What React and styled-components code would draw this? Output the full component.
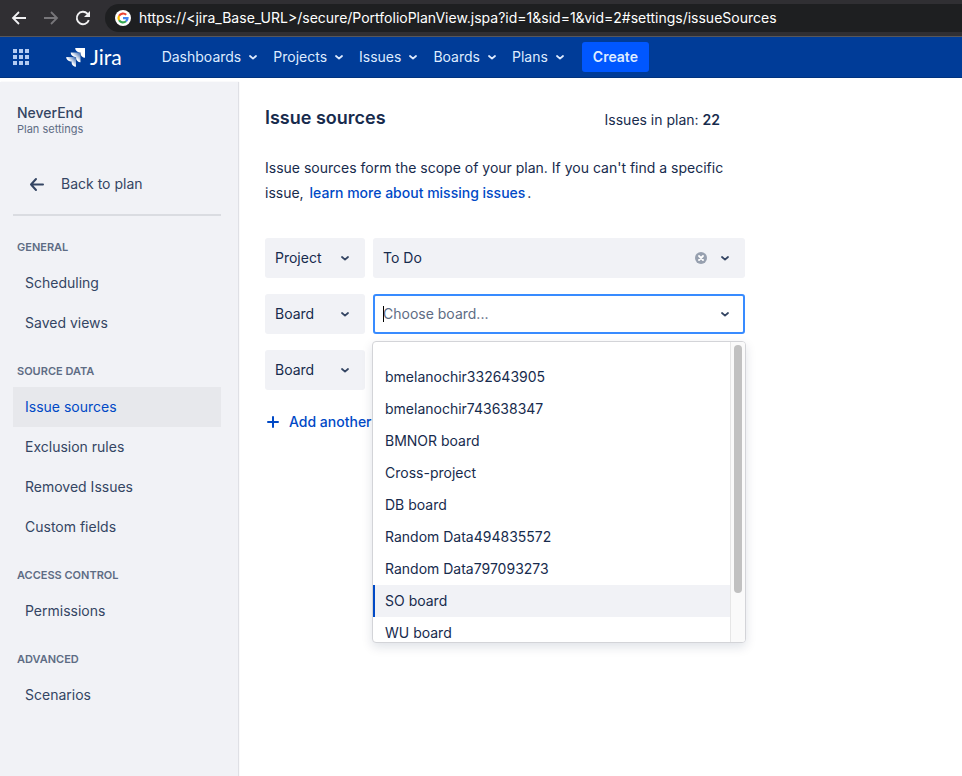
import React from 'react';
import styled, {createGlobalStyle} from 'styled-components';

const GlobalStyle = createGlobalStyle`
    *, *::before, *::after {
        box-sizing: border-box;
    }
    body {
        margin: 0;
        background: #fff;
        color: #172b4d;
        font-family: Inter, "Liberation Sans", sans-serif;
        font-size: 14px;
        line-height: 20px;
    }
    button, input, select {
        font: inherit;
        color: inherit;
    }
`;

const Page = styled.div`
    display: flex;
    flex-direction: column;
    min-height: 100vh;
`;

const BrowserBar = styled.div`
    display: flex;
    align-items: center;
    height: 37px;
    padding-left: 9px;
    background: #302f33;
    border-bottom: 1px solid #58575a;
`;

const BrowserButton = styled.button`
    display: flex;
    padding: 0;
    margin-right: 12px;
    border: 0;
    background: none;
    color: ${props => (props.disabled ? '#77767a' : '#f1f1f3')};
`;

const AddressBar = styled.label`
    display: flex;
    flex: 1;
    align-items: center;
    gap: 8px;
    height: 28px;
    padding-left: 10px;
    background: #1e1f21;
    border-radius: 14px 0 0 14px;
`;

const AddressInput = styled.input`
    flex: 1;
    min-width: 0;
    padding: 0;
    border: 0;
    outline: 0;
    background: none;
    color: #fff;
`;

const TopNav = styled.header`
    display: flex;
    align-items: center;
    height: 41px;
    padding-left: 12px;
    background: #003c98;
    border-bottom: 1px solid #00337f;
    color: #deebff;
`;

const IconButton = styled.button`
    display: flex;
    padding: 0;
    border: 0;
    background: none;
`;

const Logo = styled.a`
    display: flex;
    align-items: center;
    gap: 4px;
    margin-left: 36px;
    color: #fff;
    font-family: Lato, sans-serif;
    font-size: 21px;
    text-decoration: none;
`;

const NavMenus = styled.nav`
    display: flex;
    gap: 16px;
    margin-left: 40px;
`;

const NavButton = styled(IconButton)`
    align-items: center;
    gap: 8px;
    color: #deebff;
`;

const CreateButton = styled.button`
    height: 30px;
    margin-left: 18px;
    padding: 0 11px;
    border: 0;
    border-radius: 3px;
    background: #0057ff;
    color: #deebff;
    font-weight: 600;
`;

const Body = styled.div`
    display: flex;
    flex: 1;
    margin-top: 4px;
`;

const Sidebar = styled.aside`
    flex: 0 0 238px;
    padding: 23px 17px 24px 13px;
    background: #f1f2f6;
    box-shadow: 1px 0 1px #dfe0e5;
    color: #344563;
`;

const PlanName = styled.div`
    padding-left: 4px;
    font-weight: 500;
    line-height: 16px;
`;

const PlanCaption = styled.div`
    padding-left: 4px;
    color: #5e6c84;
    font-size: 11px;
    line-height: 16px;
`;

const BackLink = styled.a`
    display: flex;
    align-items: center;
    gap: 16px;
    height: 40px;
    margin-top: 27px;
    padding-left: 16px;
    color: inherit;
    text-decoration: none;
`;

const Rule = styled.hr`
    height: 2px;
    margin: 10px 0 23px;
    border: 0;
    background: #dadce1;
`;

const GroupTitle = styled.h2`
    margin: 20px 0 8px 4px;
    color: #5e6c84;
    font-size: 11px;
    font-weight: 600;
    line-height: 16px;
    text-transform: uppercase;
`;

const SideLink = styled.a`
    display: block;
    padding: 10px 12px;
    background: ${props => (props.$active ? '#e7e8ec' : 'transparent')};
    color: ${props => (props.$active ? '#0049c6' : 'inherit')};
    text-decoration: none;
`;

const Main = styled.main`
    flex: 1;
    min-width: 0;
    max-width: 534px;
    padding: 24px 27px;
`;

const TitleRow = styled.div`
    display: flex;
    align-items: center;
    justify-content: space-between;
    padding-right: 25px;
`;

const Title = styled.h1`
    margin: 0;
    font-size: 18px;
    font-weight: 600;
    line-height: 24px;
`;

const IssueCount = styled.div`
    padding-top: 4px;

    strong {
        font-weight: 600;
    }
`;

const Intro = styled.p`
    margin: 25px 0 33px;
    padding-right: 10px;
    line-height: 25px;
`;

const TextLink = styled.a`
    margin: 0 2px;
    color: #0049c6;
    font-weight: 500;
    text-decoration: none;
`;

const Sources = styled.div`
    display: flex;
    flex-direction: column;
    gap: 16px;
`;

const SourceRow = styled.div`
    display: grid;
    grid-template-columns: 100px 1fr;
    gap: 8px;
`;

const Field = styled.div`
    position: relative;
    display: grid;
    height: 40px;
`;

const Select = styled.select`
    appearance: none;
    min-width: 0;
    padding: 0 10px;
    border: 0;
    border-radius: 3px;
    background: #f1f2f6;
`;

const BoardInput = styled.input`
    min-width: 0;
    padding: 0 40px 0 8px;
    border: 2px solid #388bff;
    border-radius: 3px;
    outline: 0;
    background: #fff;
    caret-color: transparent;

    &::placeholder {
        color: #5e6c84;
        opacity: 1;
    }
`;

const Caret = styled.span`
    position: absolute;
    top: 12px;
    left: 10px;
    width: 1px;
    height: 16px;
    background: #000;
`;

const Adornments = styled.span`
    position: absolute;
    top: 0;
    right: 16px;
    display: flex;
    align-items: center;
    gap: 14px;
    height: 100%;
    color: #344563;
    pointer-events: none;
`;

const ClearButton = styled(IconButton)`
    pointer-events: auto;
`;

const Menu = styled.div`
    position: absolute;
    z-index: 1;
    top: calc(100% + 7px);
    left: -1px;
    right: -1px;
    display: flex;
    height: 302px;
    overflow: hidden;
    border: 1px solid #d3d4d8;
    border-radius: 4px;
    background: #fff;
    box-shadow: 0 4px 11px rgba(9, 30, 66, 0.13);
`;

const Options = styled.ul`
    flex: 1;
    height: 100%;
    margin: 0;
    padding: 19px 0 0;
    overflow: hidden;
    list-style: none;
`;

const Option = styled.li`
    padding: 6px 10px;
    border-left: 2px solid ${props => (props.$focused ? '#0049c6' : 'transparent')};
    background: ${props => (props.$focused ? '#f1f2f6' : 'transparent')};
`;

const ScrollTrack = styled.div`
    width: 15px;
    padding: 3px 2px 0 3px;
    border-left: 1px solid #e6e6e6;
    background: #fafafa;
`;

const ScrollThumb = styled.div`
    width: 8px;
    height: 248px;
    border-radius: 4px;
    background: #c1c1c1;
`;

const AddButton = styled(IconButton)`
    align-items: center;
    align-self: flex-start;
    gap: 8px;
    height: 32px;
    color: #0049c6;
    font-weight: 500;
`;

const navMenus = ['Dashboards', 'Projects', 'Issues', 'Boards', 'Plans'];

const sideGroups = [
    {title: 'General', links: ['Scheduling', 'Saved views']},
    {title: 'Source data', links: ['Issue sources', 'Exclusion rules', 'Removed Issues', 'Custom fields']},
    {title: 'Access control', links: ['Permissions']},
    {title: 'Advanced', links: ['Scenarios']},
];

const boards = [
    'bmelanochir332643905',
    'bmelanochir743638347',
    'BMNOR board',
    'Cross-project',
    'DB board',
    'Random Data494835572',
    'Random Data797093273',
    'SO board',
    'WU board',
];

const Chevron = () => (
    <svg width="8" height="6" viewBox="0 0 8 6" fill="none" stroke="currentColor" strokeWidth="1.8" strokeLinecap="round" strokeLinejoin="round" aria-hidden="true">
        <path d="M1 2l3 2.6L7 2" />
    </svg>
);

const ArrowIcon = ({flip}) => (
    <svg width="20" height="20" viewBox="0 0 20 20" fill="none" stroke="currentColor" strokeWidth="1.8" aria-hidden="true">
        <path d={flip ? 'M3 10h13M10 4l6 6-6 6' : 'M17 10H4M10 4l-6 6 6 6'} />
    </svg>
);

const ReloadIcon = () => (
    <svg width="20" height="20" viewBox="0 0 20 20" fill="none" stroke="currentColor" strokeWidth="1.9" aria-hidden="true">
        <path d="M15.8 12.2A6.2 6.2 0 1 1 14.4 5.6L16 7.2" />
        <path d="M17 3v6h-6z" fill="currentColor" stroke="none" />
    </svg>
);

const GoogleIcon = () => (
    <svg width="16" height="16" viewBox="0 0 16 16" fill="none" strokeWidth="2.2" aria-hidden="true">
        <circle cx="8" cy="8" r="8" fill="#fff" />
        <path d="M4.1 5.8A4.5 4.5 0 0 1 11.2 4.8" stroke="#ea4335" />
        <path d="M4.1 10.2A4.5 4.5 0 0 1 4.1 5.8" stroke="#fbbc05" />
        <path d="M11 11.3A4.5 4.5 0 0 1 4.1 10.2" stroke="#34a853" />
        <path d="M8 8.1h4.5A4.5 4.5 0 0 1 11 11.3" stroke="#4285f4" />
    </svg>
);

const AppsIcon = () => (
    <svg width="18" height="18" viewBox="0 0 18 18" fill="#b3cbf2" aria-hidden="true">
        {[1, 7, 13].map(y => [1, 7, 13].map(x => <rect key={`${x}-${y}`} x={x} y={y} width="4" height="4" />))}
    </svg>
);

const JiraMark = () => (
    <svg width="20" height="20" viewBox="0 0 20 20" aria-hidden="true">
        <defs>
            <linearGradient id="fade" x1="1" y1="0" x2="0.3" y2="0.7">
                <stop offset="0.15" stopColor="#fff" stopOpacity="0.3" />
                <stop offset="0.75" stopColor="#fff" />
            </linearGradient>
        </defs>
        <path d="M9.2 1H19v9.8a4.4 4.4 0 0 1-4.4-4.4V5.4h-1A4.4 4.4 0 0 1 9.2 1z" fill="#fff" />
        <path d="M4.7 5.5h9.8v9.8a4.4 4.4 0 0 1-4.4-4.4v-1h-1a4.4 4.4 0 0 1-4.4-4.4z" fill="url(#fade)" />
        <path d="M0.2 10H10v9.8a4.4 4.4 0 0 1-4.4-4.4v-1h-1A4.4 4.4 0 0 1 0.2 10z" fill="url(#fade)" />
    </svg>
);

const BackIcon = () => (
    <svg width="16" height="16" viewBox="0 0 16 16" fill="none" stroke="currentColor" strokeWidth="2" strokeLinecap="round" strokeLinejoin="round" aria-hidden="true">
        <path d="M14 8.5H2M7 3L2 8.5 7 14" />
    </svg>
);

const ClearIcon = () => (
    <svg width="12" height="12" viewBox="0 0 12 12" aria-hidden="true">
        <circle cx="6" cy="6" r="6" fill="#97a0af" />
        <path d="M4 4l4 4M8 4L4 8" stroke="#fff" strokeWidth="1.8" strokeLinecap="round" />
    </svg>
);

const PlusIcon = () => (
    <svg width="16" height="16" viewBox="0 0 16 16" fill="none" stroke="currentColor" strokeWidth="2" strokeLinecap="round" aria-hidden="true">
        <path d="M8 3v10M3 8h10" />
    </svg>
);

const SelectField = ({label, value, clearable}) => (
    <Field>
        <Select aria-label={label} defaultValue={value}>
            <option>{value}</option>
        </Select>
        <Adornments>
            {clearable && (
                <ClearButton type="button" aria-label="Clear">
                    <ClearIcon />
                </ClearButton>
            )}
            <Chevron />
        </Adornments>
    </Field>
);

const BoardPicker = () => (
    <Field>
        <BoardInput role="combobox" aria-label="Board" aria-expanded="true" aria-controls="boards" placeholder="Choose board..." />
        <Caret />
        <Adornments>
            <Chevron />
        </Adornments>
        <Menu>
            <Options id="boards" role="listbox">
                {boards.map(board => (
                    <Option key={board} role="option" aria-selected={board === 'SO board'} $focused={board === 'SO board'}>
                        {board}
                    </Option>
                ))}
            </Options>
            <ScrollTrack>
                <ScrollThumb />
            </ScrollTrack>
        </Menu>
    </Field>
);

export default function App() {
    return (
        <Page>
            <GlobalStyle />
            <BrowserBar>
                <BrowserButton type="button" aria-label="Back">
                    <ArrowIcon />
                </BrowserButton>
                <BrowserButton type="button" aria-label="Forward" disabled>
                    <ArrowIcon flip />
                </BrowserButton>
                <BrowserButton type="button" aria-label="Reload">
                    <ReloadIcon />
                </BrowserButton>
                <AddressBar>
                    <GoogleIcon />
                    <AddressInput
                        aria-label="Address"
                        defaultValue="https://<jira_Base_URL>/secure/PortfolioPlanView.jspa?id=1&sid=1&vid=2#settings/issueSources" />
                </AddressBar>
            </BrowserBar>
            <TopNav>
                <IconButton type="button" aria-label="Apps">
                    <AppsIcon />
                </IconButton>
                <Logo href="#">
                    <JiraMark />
                    Jira
                </Logo>
                <NavMenus>
                    {navMenus.map(name => (
                        <NavButton key={name} type="button">
                            {name}
                            <Chevron />
                        </NavButton>
                    ))}
                </NavMenus>
                <CreateButton type="button">Create</CreateButton>
            </TopNav>
            <Body>
                <Sidebar>
                    <PlanName>NeverEnd</PlanName>
                    <PlanCaption>Plan settings</PlanCaption>
                    <BackLink href="#">
                        <BackIcon />
                        Back to plan
                    </BackLink>
                    <Rule />
                    {sideGroups.map(group => (
                        <nav key={group.title}>
                            <GroupTitle>{group.title}</GroupTitle>
                            {group.links.map(link => (
                                <SideLink key={link} href="#" $active={link === 'Issue sources'}>
                                    {link}
                                </SideLink>
                            ))}
                        </nav>
                    ))}
                </Sidebar>
                <Main>
                    <TitleRow>
                        <Title>Issue sources</Title>
                        <IssueCount>
                            Issues in plan: <strong>22</strong>
                        </IssueCount>
                    </TitleRow>
                    <Intro>
                        Issue sources form the scope of your plan. If you can't find a specific issue,{' '}
                        <TextLink href="#">learn more about missing issues</TextLink>.
                    </Intro>
                    <Sources>
                        <SourceRow>
                            <SelectField label="Source type" value="Project" />
                            <SelectField label="Project" value="To Do" clearable />
                        </SourceRow>
                        <SourceRow>
                            <SelectField label="Source type" value="Board" />
                            <BoardPicker />
                        </SourceRow>
                        <SourceRow>
                            <SelectField label="Source type" value="Board" />
                            <SelectField label="Board" value="" />
                        </SourceRow>
                        <AddButton type="button">
                            <PlusIcon />
                            Add another
                        </AddButton>
                    </Sources>
                </Main>
            </Body>
        </Page>
    );
}
